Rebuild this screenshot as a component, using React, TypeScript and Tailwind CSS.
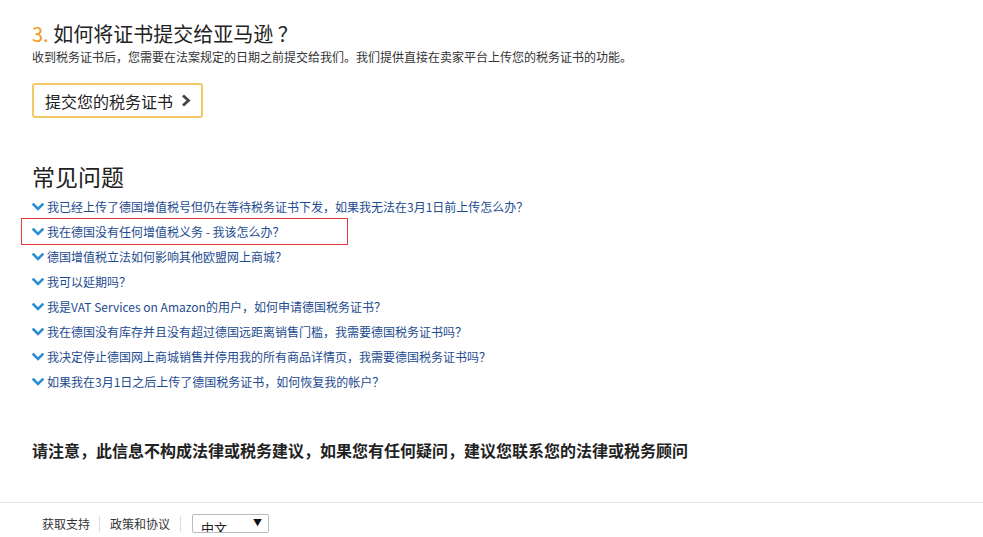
import React from "react";

const font = { fontFamily: '"Noto Sans CJK SC", "Noto Sans", "Liberation Sans", sans-serif' };

const faqs = [
  "我已经上传了德国增值税号但仍在等待税务证书下发，如果我无法在3月1日前上传怎么办？",
  "我在德国没有任何增值税义务 - 我该怎么办？",
  "德国增值税立法如何影响其他欧盟网上商城？",
  "我可以延期吗？",
  "我是VAT Services on Amazon的用户，如何申请德国税务证书？",
  "我在德国没有库存并且没有超过德国远距离销售门槛，我需要德国税务证书吗？",
  "我决定停止德国网上商城销售并停用我的所有商品详情页，我需要德国税务证书吗？",
  "如果我在3月1日之后上传了德国税务证书，如何恢复我的帐户？",
];

function Chevron() {
  return (
    <svg width="12" height="8" viewBox="0 0 12 8" className="shrink-0">
      <polyline points="1.5,1.5 6,6 10.5,1.5" fill="none" stroke="#2a8ed3" strokeWidth="2.6" strokeLinecap="square" />
    </svg>
  );
}

export default function App() {
  return (
    <div className="w-[983px] h-[537px] bg-white overflow-hidden text-[#333]" style={font}>
      <div className="pl-[32px] pt-[20px]">
        <h1 className="text-[20px] leading-[28px] font-normal text-[#222]">
          <span className="text-[#f39a1e]">3.</span> 如何将证书提交给亚马逊 ？
        </h1>
        <p className="text-[12px] leading-[18px] text-[#333]">
          收到税务证书后，您需要在法案规定的日期之前提交给我们。我们提供直接在卖家平台上传您的税务证书的功能。
        </p>
        <div className="mt-[17px] w-[171px] h-[35px] border-2 border-[#f3c867] rounded-[3px] flex items-center pl-[11px] gap-[8px]">
          <span className="text-[16px] leading-[20px] text-[#222]">提交您的税务证书</span>
          <svg width="10" height="13" viewBox="0 0 10 13">
            <polyline points="2,1.5 7.5,6.5 2,11.5" fill="none" stroke="#444" strokeWidth="2.8" />
          </svg>
        </div>
        <h2 className="mt-[43px] text-[23px] leading-[30px] font-normal text-[#222]">常见问题</h2>
        <div className="mt-[3px] flex flex-col">
          {faqs.map((q, i) => (
            <div key={i} className="relative h-[25px] flex items-center gap-[3px] text-[12px] text-[#1d4b8f]">
              <Chevron />
              <span>{q}</span>
              {i === 1 && (
                <div className="absolute left-[-11px] top-[-1px] w-[327px] h-[27px] border border-[#e8383d]" />
              )}
            </div>
          ))}
        </div>
        <p className="mt-[44px] text-[16px] leading-[24px] font-bold text-[#222]">
          请注意，此信息不构成法律或税务建议，如果您有任何疑问，建议您联系您的法律或税务顾问
        </p>
      </div>
      <div className="mt-[40px] border-t border-[#e3e3e3] pl-[42px] pt-[11px] flex items-center text-[12px] text-[#333]">
        <span className="pr-[9px] border-r border-[#ddd] leading-[16px]">获取支持</span>
        <span className="px-[10px] border-r border-[#ddd] leading-[16px]">政策和协议</span>
        <div className="ml-[11px] w-[77px] h-[19px] border border-[#bbb] rounded-[2px] relative overflow-hidden">
          <span className="absolute left-[8px] top-[5px] text-[13px] leading-[16px] text-[#222]">中文</span>
          <span className="absolute right-[6px] top-[1px] text-[9px] leading-[14px] text-[#111]">▼</span>
        </div>
      </div>
    </div>
  );
}
